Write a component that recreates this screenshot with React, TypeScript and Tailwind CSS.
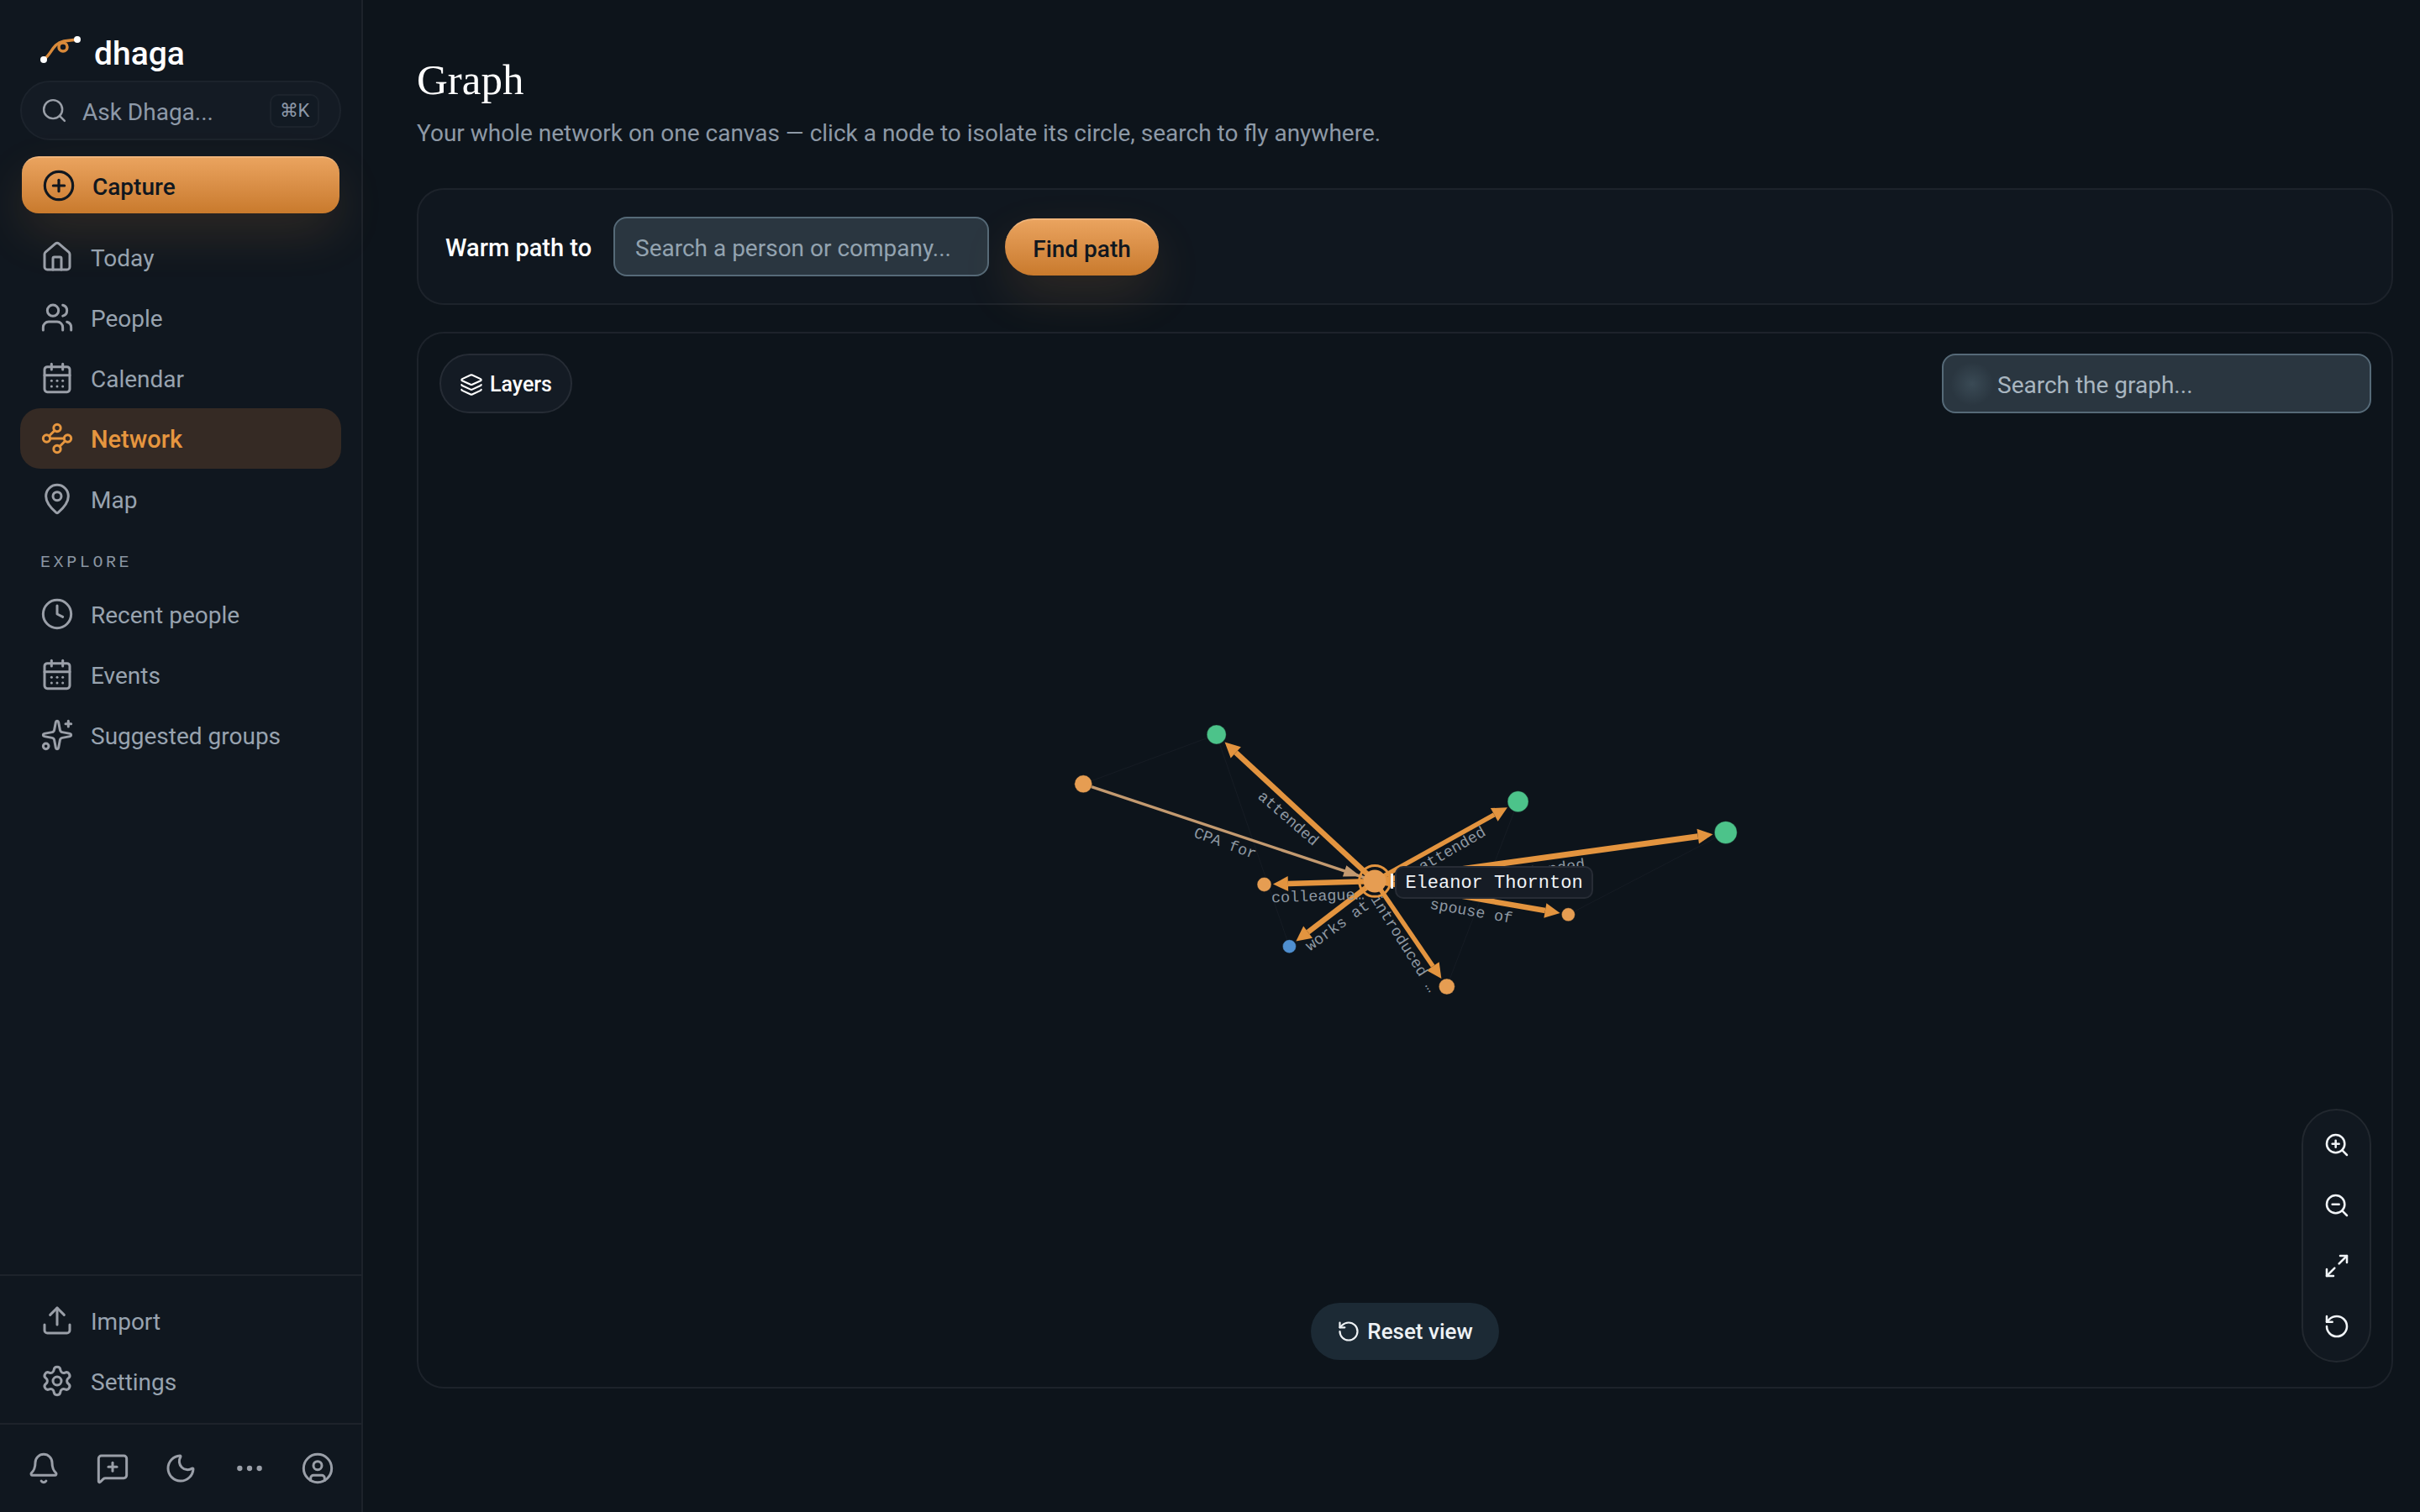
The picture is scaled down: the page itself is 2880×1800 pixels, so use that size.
import {
  Bell, CalendarDays, CirclePlus, CircleUser, Clock, Ellipsis, House, Layers, MapPin,
  Maximize2, MessageSquarePlus, Moon, RotateCcw, Search, Settings, Sparkles, Upload,
  Users, Waypoints, ZoomIn, ZoomOut,
} from 'lucide-react'

const SANS = 'font-["Roboto",sans-serif]'
const MONO = '"Liberation Mono", monospace'

const mainNav = [
  { label: 'Today', icon: House },
  { label: 'People', icon: Users },
  { label: 'Calendar', icon: CalendarDays },
  { label: 'Network', icon: Waypoints, active: true },
  { label: 'Map', icon: MapPin },
]

const exploreNav = [
  { label: 'Recent people', icon: Clock },
  { label: 'Events', icon: CalendarDays },
  { label: 'Suggested groups', icon: Sparkles },
]

const footerNav = [
  { label: 'Import', icon: Upload },
  { label: 'Settings', icon: Settings },
]

const CENTER = { x: 1636, y: 1049 }

const nodes = [
  { x: 1447, y: 874, r: 11.5, fill: '#4cc38a', w: 6.5 },
  { x: 1288, y: 933, r: 10.5, fill: '#e69d52', w: 3.5, stroke: '#c39a70', reverse: true },
  { x: 1504, y: 1053, r: 8.5, fill: '#e69d52', w: 6.5 },
  { x: 1534, y: 1127, r: 8, fill: '#4f8fd0', w: 6.5 },
  { x: 1807, y: 954, r: 12.5, fill: '#4cc38a', w: 5.5 },
  { x: 2055, y: 991, r: 13.5, fill: '#4cc38a', w: 7 },
  { x: 1867, y: 1089, r: 8, fill: '#e69d52', w: 6.5 },
  { x: 1722, y: 1175, r: 9.5, fill: '#e69d52', w: 5.5 },
]

const faintLines = [
  [1288, 933, 1447, 874],
  [1447, 874, 1534, 1127],
  [1807, 954, 1722, 1175],
  [1867, 1089, 2055, 991],
]

const edgeLabels = [
  { text: 'attended', x: 1532, y: 975, rot: 41 },
  { text: 'CPA for', x: 1457, y: 1005, rot: 20 },
  { text: 'colleague…', x: 1568, y: 1068, rot: -2 },
  { text: 'works at', x: 1592, y: 1103, rot: -36 },
  { text: 'introduced …', x: 1670, y: 1124, rot: 58 },
  { text: 'attended', x: 1729, y: 1012, rot: -30 },
  { text: 'spouse of', x: 1751, y: 1086, rot: 10 },
  { text: 'attended', x: 1843, y: 1036, rot: -8 },
]

function NavRow({ label, icon: Icon, active }: { label: string; icon: typeof House; active?: boolean }) {
  return (
    <div
      className={`flex h-[72px] items-center gap-[20px] rounded-[24px] pl-[24px] ${
        active ? 'bg-[#352a24] text-[29px] font-medium text-[#e6963f]' : 'text-[28px] text-[#98a3af]'
      }`}
    >
      <Icon strokeWidth={1.8} className={`h-[40px] w-[40px] ${active ? 'text-[#e6963f]' : 'text-[#9a9fa8]'}`} />
      <span className="mt-[4px]">{label}</span>
    </div>
  )
}

function Edge({ node }: { node: (typeof nodes)[number] }) {
  const color = node.stroke ?? '#e3943f'
  const dx = node.x - CENTER.x
  const dy = node.y - CENTER.y
  const len = Math.hypot(dx, dy)
  const ux = dx / len
  const uy = dy / len
  const px = -uy
  const py = ux
  // arrow points at the far node, except the tan one which points back at the center
  const tipDist = node.reverse ? 18 : len - node.r - 2
  const backDist = node.reverse ? 38 : tipDist - 18
  const tipX = CENTER.x + ux * tipDist
  const tipY = CENTER.y + uy * tipDist
  const backX = CENTER.x + ux * backDist
  const backY = CENTER.y + uy * backDist
  const half = node.reverse ? 7 : 9
  return (
    <g>
      <line
        x1={CENTER.x}
        y1={CENTER.y}
        x2={node.reverse ? node.x : backX}
        y2={node.reverse ? node.y : backY}
        stroke={color}
        strokeWidth={node.w}
      />
      <polygon
        fill={color}
        points={`${tipX},${tipY} ${backX + px * half},${backY + py * half} ${backX - px * half},${backY - py * half}`}
      />
    </g>
  )
}

function GraphCanvas() {
  return (
    <svg className="absolute inset-0 h-full w-full" viewBox="496 395 2352 1258">
      {faintLines.map(([x1, y1, x2, y2]) => (
        <line key={`${x1}-${y1}`} x1={x1} y1={y1} x2={x2} y2={y2} stroke="#161c24" strokeWidth="1" />
      ))}
      {nodes.map((n) => (
        <Edge key={`e-${n.x}`} node={n} />
      ))}
      {nodes.map((n) => (
        <circle key={`n-${n.x}`} cx={n.x} cy={n.y} r={n.r} fill={n.fill} stroke="#0c131a" strokeOpacity="0.4" />
      ))}
      {edgeLabels.map((l) => (
        <text
          key={`${l.text}-${l.x}`}
          x={l.x}
          y={l.y}
          textAnchor="middle"
          dominantBaseline="central"
          transform={`rotate(${l.rot} ${l.x} ${l.y})`}
          fill="#8e98a2"
          fontSize="18.5"
          fontFamily={MONO}
        >
          {l.text}
        </text>
      ))}
      <circle cx={CENTER.x} cy={CENTER.y} r="13.5" fill="#e69d52" />
      <circle cx={CENTER.x} cy={CENTER.y} r="18.5" fill="none" stroke="#e3943f" strokeWidth="3" />
      <rect x="1655" y="1040" width="3" height="18" fill="#f4f6f8" />
    </svg>
  )
}

export default function App() {
  return (
    <div className={`flex h-screen w-full overflow-hidden bg-[#0d141b] ${SANS}`}>
      {/* Sidebar */}
      <aside className="flex w-[432px] shrink-0 flex-col border-r-2 border-[#1d232b] bg-[#10171f]">
        <div className="flex h-[96px] items-center gap-[14px] pl-[46px] pt-[26px]">
          <svg width="52" height="36" viewBox="46 44 52 36" fill="none">
            <path d="M52 72C62 65 62 53 76 50L92 48" stroke="#d98a3a" strokeWidth="3.5" strokeLinecap="round" />
            <circle cx="75" cy="57" r="5" stroke="#d98a3a" strokeWidth="3.5" />
            <circle cx="52" cy="72" r="4" fill="#fff" />
            <circle cx="92" cy="48" r="4" fill="#fff" />
          </svg>
          <span className="mt-[6px] text-[39px] font-medium leading-none text-white">dhaga</span>
        </div>

        <div className="mx-[24px] flex h-[71px] items-center rounded-full border-2 border-[#1c232c] bg-[#141b24] pl-[22px] pr-[24px]">
          <Search strokeWidth={1.8} className="h-[33px] w-[33px] text-[#9a9fa8]" />
          <span className="ml-[17px] mt-[5px] flex-1 text-[28px] text-[#8d99a8]">Ask Dhaga...</span>
          <span className="flex h-[40px] w-[59px] items-center justify-center rounded-[10px] border-2 border-[#1c232c] bg-[#121a23] text-[22px] text-[#8d99a8]">
            ⌘K
          </span>
        </div>

        <div className="mx-[26px] mt-[19px] flex h-[68px] items-center gap-[20px] rounded-[20px] border-t-2 border-[#f0b47a] bg-gradient-to-b from-[#eaa35e] to-[#c97a2c] pl-[24px] shadow-[0_24px_60px_-4px_rgba(230,150,70,0.16)]">
          <CirclePlus strokeWidth={1.9} className="h-[40px] w-[40px] text-[#10171f]" />
          <span className="mt-[3px] text-[28px] font-medium text-[#10171f]">Capture</span>
        </div>

        <nav className="mx-[24px] mt-[16px] flex flex-col">
          {mainNav.map((item) => (
            <NavRow key={item.label} {...item} />
          ))}
        </nav>

        <div className='mt-[28px] pl-[48px] font-["Liberation_Mono",monospace] text-[20px] leading-[24px] tracking-[0.18em] text-[#8a95a1]'>
          EXPLORE
        </div>

        <nav className="mx-[24px] mt-[13px] flex flex-col">
          {exploreNav.map((item) => (
            <NavRow key={item.label} {...item} />
          ))}
        </nav>

        <div className="mt-auto border-t-2 border-[#1d232b] px-[24px] pb-[14px] pt-[17px]">
          {footerNav.map((item) => (
            <NavRow key={item.label} {...item} />
          ))}
        </div>

        <div className="flex h-[106px] items-center justify-between border-t-2 border-[#1d232b] px-[32px] text-[#9a9fa8]">
          <Bell strokeWidth={1.8} className="h-[40px] w-[40px]" />
          <MessageSquarePlus strokeWidth={1.8} className="h-[40px] w-[40px]" />
          <Moon strokeWidth={1.8} className="h-[40px] w-[40px]" />
          <Ellipsis strokeWidth={1.8} className="h-[40px] w-[40px]" />
          <CircleUser strokeWidth={1.8} className="h-[40px] w-[40px]" />
        </div>
      </aside>

      {/* Main */}
      <main className="flex min-w-0 flex-1 flex-col pl-[64px] pr-[32px]">
        <h1 className='mt-[66px] font-["Liberation_Serif",serif] text-[51px] font-normal leading-[58px] text-white'>Graph</h1>
        <p className="mt-[15px] text-[28px] leading-[40px] text-[#8d99a6]">
          Your whole network on one canvas — click a node to isolate its circle, search to fly anywhere.
        </p>

        <section className="mt-[45px] flex h-[139px] items-center rounded-[32px] border-2 border-[#1d232b] bg-[#10171f] pl-[32px]">
          <span className="mt-[4px] w-[200px] shrink-0 text-[29px] font-medium text-white">Warm path to</span>
          <div className="flex h-[71px] w-[447px] items-center rounded-[16px] border-2 border-[#566a78] bg-[#2a3640] pl-[24px] pt-[4px] text-[28px] text-[#93a3b0]">
            Search a person or company...
          </div>
          <button className="ml-[19px] h-[68px] w-[183px] rounded-full border-t-2 border-[#f0b47a] bg-gradient-to-b from-[#eaa35e] to-[#c97a2c] pt-[4px] text-[28px] font-medium text-[#10171f] shadow-[0_24px_60px_-4px_rgba(230,150,70,0.16)]">
            Find path
          </button>
        </section>

        <section className="relative mt-[32px] h-[1258px] overflow-hidden rounded-[32px] border-2 border-[#1d232b] bg-[#0d141b]">
          <GraphCanvas />

          {/* Overlays */}
          <div className="absolute left-[25px] top-[24px] flex h-[71px] w-[158px] items-center justify-center gap-[8px] rounded-full border-2 border-[#262c35] bg-[#141b24] pt-[2px] text-[25px] font-medium text-white">
            <Layers strokeWidth={1.8} className="h-[28px] w-[28px]" />
            Layers
          </div>

          <div className="absolute right-[24px] top-[24px] flex h-[71px] w-[511px] items-center rounded-[16px] border-2 border-[#566a78] bg-[#2a3640] pl-[64px] pt-[4px] text-[28px] text-[#a9b6c0]">
            <div className="absolute left-[8px] top-[8px] h-[52px] w-[52px] rounded-full bg-[radial-gradient(circle,#3a4a55,transparent_70%)]" />
            Search the graph...
          </div>

          <div className='absolute left-[1162px] top-[634px] flex h-[39px] w-[236px] items-center justify-center rounded-[10px] border-2 border-[#272c35] bg-[#161c25] pt-[2px] font-["Liberation_Mono",monospace] text-[22px] text-[#f1f4f7]'>
            Eleanor Thornton
          </div>

          <div className="absolute left-[1062px] top-[1154px] flex h-[68px] w-[224px] items-center justify-center gap-[8px] rounded-full bg-[#1c2a35] text-[26px] font-medium text-[#eef2f5]">
            <RotateCcw strokeWidth={1.9} className="h-[28px] w-[28px]" />
            Reset view
          </div>

          <div className="absolute right-[24px] top-[923px] flex w-[83px] flex-col items-center rounded-full border-2 border-[#22282f] bg-[#111820] py-[5px] text-[#f1f4f7]">
            <div className="flex h-[72px] items-center justify-center"><ZoomIn strokeWidth={1.9} className="h-[32px] w-[32px]" /></div>
            <div className="flex h-[72px] items-center justify-center"><ZoomOut strokeWidth={1.9} className="h-[32px] w-[32px]" /></div>
            <div className="flex h-[72px] items-center justify-center"><Maximize2 strokeWidth={1.9} className="h-[32px] w-[32px]" /></div>
            <div className="flex h-[72px] items-center justify-center"><RotateCcw strokeWidth={1.9} className="h-[32px] w-[32px]" /></div>
          </div>
        </section>
      </main>
    </div>
  )
}
